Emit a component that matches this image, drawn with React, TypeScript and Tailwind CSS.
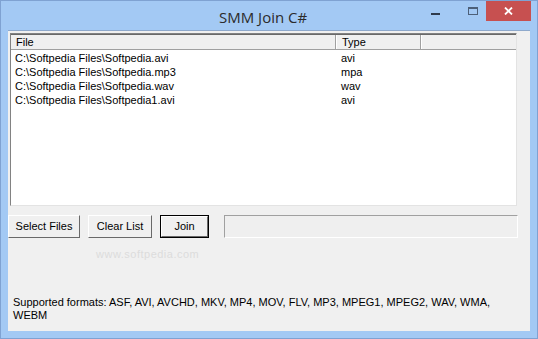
import React from 'react';

const files = [
  { path: 'C:\\Softpedia Files\\Softpedia.avi', type: 'avi' },
  { path: 'C:\\Softpedia Files\\Softpedia.mp3', type: 'mpa' },
  { path: 'C:\\Softpedia Files\\Softpedia.wav', type: 'wav' },
  { path: 'C:\\Softpedia Files\\Softpedia1.avi', type: 'avi' },
];

const font = { fontFamily: '"Liberation Sans", Arial, sans-serif' };

const WinButton: React.FC<{ label: string; width: string; isDefault?: boolean }> = ({ label, width, isDefault }) => (
  <div className={`${width} h-[23px] ${isDefault ? 'border border-black' : ''}`}>
    <div className="h-full border border-t-white border-l-white border-b-[#696969] border-r-[#696969] bg-[#f0f0f0] flex items-center justify-center text-[11px] text-black">
      {label}
    </div>
  </div>
);

export default function App() {
  return (
    <div className="w-[538px] h-[339px] bg-[#a3c9f4] border border-[#7fa2d2] flex flex-col" style={font}>
      {/* title bar */}
      <div className="h-[29px] flex items-start shrink-0">
        <div
          className="ml-[218px] mt-[5px] text-[15px] text-[#2b2b2b]"
          style={{ fontFamily: '"Open Sans", "Noto Sans", sans-serif' }}
        >
          SMM Join C#
        </div>
        <div className="ml-auto flex items-start">
          <div className="w-[9px] h-[2px] bg-[#2f3b4c] mt-[12px]" />
          <div className="ml-[28px] mt-[6px] w-[10px] h-[8px] border border-[#4d6079] border-t-2" />
          <div className="ml-[8px] w-[45px] h-[20px] bg-[#c75050] flex items-center justify-center">
            <svg width="9" height="8" viewBox="0 0 9 8">
              <path d="M1 0.5 L8 7.5 M8 0.5 L1 7.5" stroke="white" strokeWidth="1.8" />
            </svg>
          </div>
          <div className="w-[6px]" />
        </div>
      </div>

      {/* client area */}
      <div className="flex-1 mx-[7px] mb-[7px] bg-[#f0f0f0] border-t border-[#8ea9cc] flex flex-col text-[11px] text-black">
        {/* list view */}
        <div className="ml-[2px] mt-[2px] w-[507px] h-[173px] border border-t-[#828282] border-l-[#828282] border-b-[#e3e3e3] border-r-[#e3e3e3] bg-white flex flex-col">
          <div className="h-[16px] flex bg-[#f0f0f0] border-b border-[#a0a0a0] border-t border-t-[#696969]">
            <div className="w-[325px] pl-[5px] border-r border-r-[#a0a0a0] leading-[14px]">File</div>
            <div className="w-[85px] pl-[5px] border-l border-l-white border-r border-r-[#a0a0a0] leading-[14px]">Type</div>
            <div className="flex-1 border-l border-l-white" />
          </div>
          <div className="pt-[1px]">
            {files.map((f) => (
              <div key={f.path} className="h-[14px] flex leading-[14px]">
                <div className="w-[326px] pl-[4px]">{f.path}</div>
                <div className="pl-[4px]">{f.type}</div>
              </div>
            ))}
          </div>
        </div>

        {/* buttons */}
        <div className="mt-[9px] flex items-center">
          <WinButton label="Select Files" width="w-[72px]" />
          <div className="ml-[8px]">
            <WinButton label="Clear List" width="w-[64px]" />
          </div>
          <div className="ml-[8px]">
            <WinButton label="Join" width="w-[49px]" isDefault />
          </div>
          <div className="ml-[15px] w-[294px] h-[23px] border border-t-[#a0a0a0] border-l-[#a0a0a0] border-b-white border-r-white bg-[#efefef]" />
        </div>

        {/* watermark */}
        <div className="ml-[88px] mt-[8px] text-[11px] text-[#dcdcdc] tracking-[0.5px]">www.softpedia.com</div>

        {/* supported formats */}
        <div className="mt-auto mb-[9px] ml-[5px] leading-[13px]">
          Supported formats: ASF, AVI, AVCHD, MKV, MP4, MOV, FLV, MP3, MPEG1, MPEG2, WAV, WMA,
          <br />
          WEBM
        </div>
      </div>
    </div>
  );
}
